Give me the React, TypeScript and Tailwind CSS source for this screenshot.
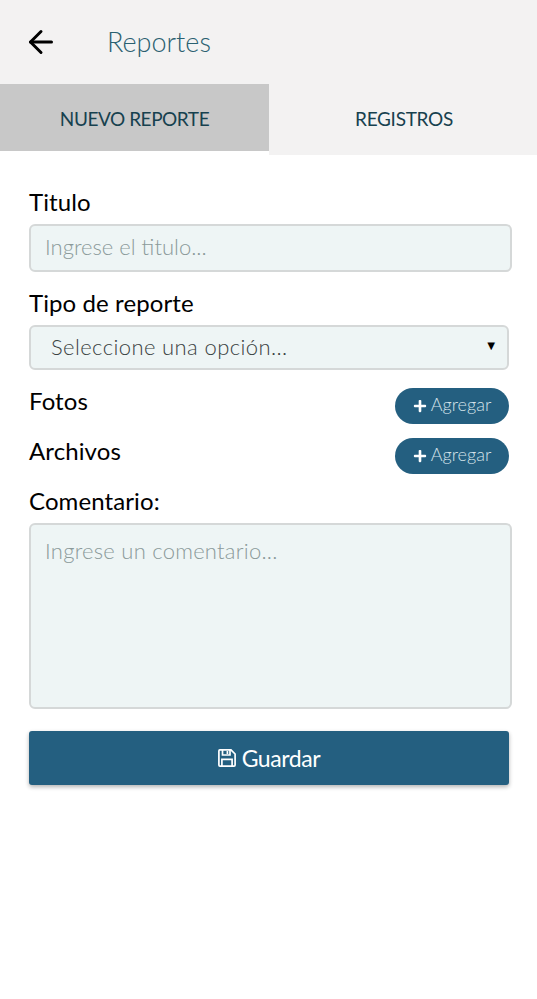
import { ArrowLeft } from "lucide-react";
import { FaPlus } from "react-icons/fa";

const labelClass = "text-[24px] leading-[30px] text-black tracking-[0.1px]";

function SaveIcon() {
	return (
		<svg viewBox="0 0 18 18" className="w-[18px] h-[18px]" fill="none" stroke="currentColor" strokeWidth="1.7">
			<path d="M1.9 0.9 H13 L17.1 5 V16 a1.1 1.1 0 0 1 -1.1 1.1 H2 a1.1 1.1 0 0 1 -1.1 -1.1 V2 a1.1 1.1 0 0 1 1 -1.1 Z" />
			<path d="M4.5 1 V6 H12 V1" />
			<path d="M3.9 17 V10.4 H14.1 V17" />
			<path d="M9.4 2 V5" />
		</svg>
	);
}

function AddRow({ label, className = "" }: { label: string; className?: string }) {
	return (
		<div className={`flex justify-between items-start -mr-[1px] ${className}`}>
			<span className={`${labelClass} pt-[1px]`}>{label}</span>
			<button
				type="button"
				className="mt-[3px] w-[114px] h-[36px] pb-[3px] rounded-full bg-[#245f80] flex items-center justify-center gap-[4px] text-[#d5e3ea] text-[18px] font-light"
			>
				<FaPlus className="w-[14px] h-[14px] mt-[2px] text-white" />
				Agregar
			</button>
		</div>
	);
}

export default function App() {
	return (
		<div className="w-[537px] h-[999px] bg-white font-['Lato','Noto_Sans',sans-serif]">
			{/* Header */}
			<div className="h-[84px] bg-[#f3f2f2] flex items-center pl-[23px]">
				<ArrowLeft className="w-[36px] h-[36px] text-black" strokeWidth={2} />
				<h1 className="ml-[48px] text-[#2a6070] text-[27px] font-light">Reportes</h1>
			</div>

			{/* Tabs */}
			<div className="flex items-start h-[71px]">
				<div className="w-[269px] h-[67px] pt-[3px] bg-[#c8c8c8] flex items-center justify-center text-[#17414f] text-[19px] tracking-[-0.45px]">
					NUEVO REPORTE
				</div>
				<div className="flex-1 h-[71px] pb-[1px] pl-[2px] bg-[#f3f2f2] flex items-center justify-center text-[#17414f] text-[19px] tracking-[-0.3px]">
					REGISTROS
				</div>
			</div>

			{/* Form */}
			<form className="px-[29px] pt-[32px] flex flex-col">
				<label className={labelClass}>Titulo</label>
				<input
					placeholder="Ingrese el titulo..."
					className="mt-[7px] w-[483px] h-[48px] px-[14px] pb-[3px] bg-[#eef5f5] border-2 border-[#d5d8d8] rounded-[6px] text-[22px] font-light outline-none placeholder:text-[#8b9a9a]"
				/>

				<label className={`${labelClass} mt-[16px]`}>Tipo de reporte</label>
				<div className="mt-[7px] w-[480px] h-[45px] pl-[20px] pr-[9px] pb-[3px] bg-[#eef5f5] border-2 border-[#d5d8d8] rounded-[6px] flex items-center justify-between text-[22px] font-light text-[#3a4242] tracking-[0.4px]">
					<span>Seleccione una opción...</span>
					<span className="text-[13px] text-black">▼</span>
				</div>

				<AddRow label="Fotos" className="mt-[15px]" />
				<AddRow label="Archivos" className="mt-[11px]" />

				<label className={`${labelClass} mt-[12px]`}>Comentario:</label>
				<textarea
					placeholder="Ingrese un comentario..."
					className="mt-[7px] w-[483px] h-[186px] px-[14px] py-[9px] resize-none bg-[#eef5f5] border-2 border-[#d5d8d8] rounded-[6px] text-[22px] font-light tracking-[0.25px] outline-none placeholder:text-[#8b9a9a]"
				/>

				<button
					type="button"
					className="mt-[22px] w-[480px] h-[54px] bg-[#245f80] rounded-[3px] shadow-[0_2px_4px_rgba(0,0,0,0.3)] flex items-center justify-center gap-[6px] text-white text-[23px] tracking-[-0.4px]"
				>
					<SaveIcon />
					Guardar
				</button>
			</form>
		</div>
	);
}
